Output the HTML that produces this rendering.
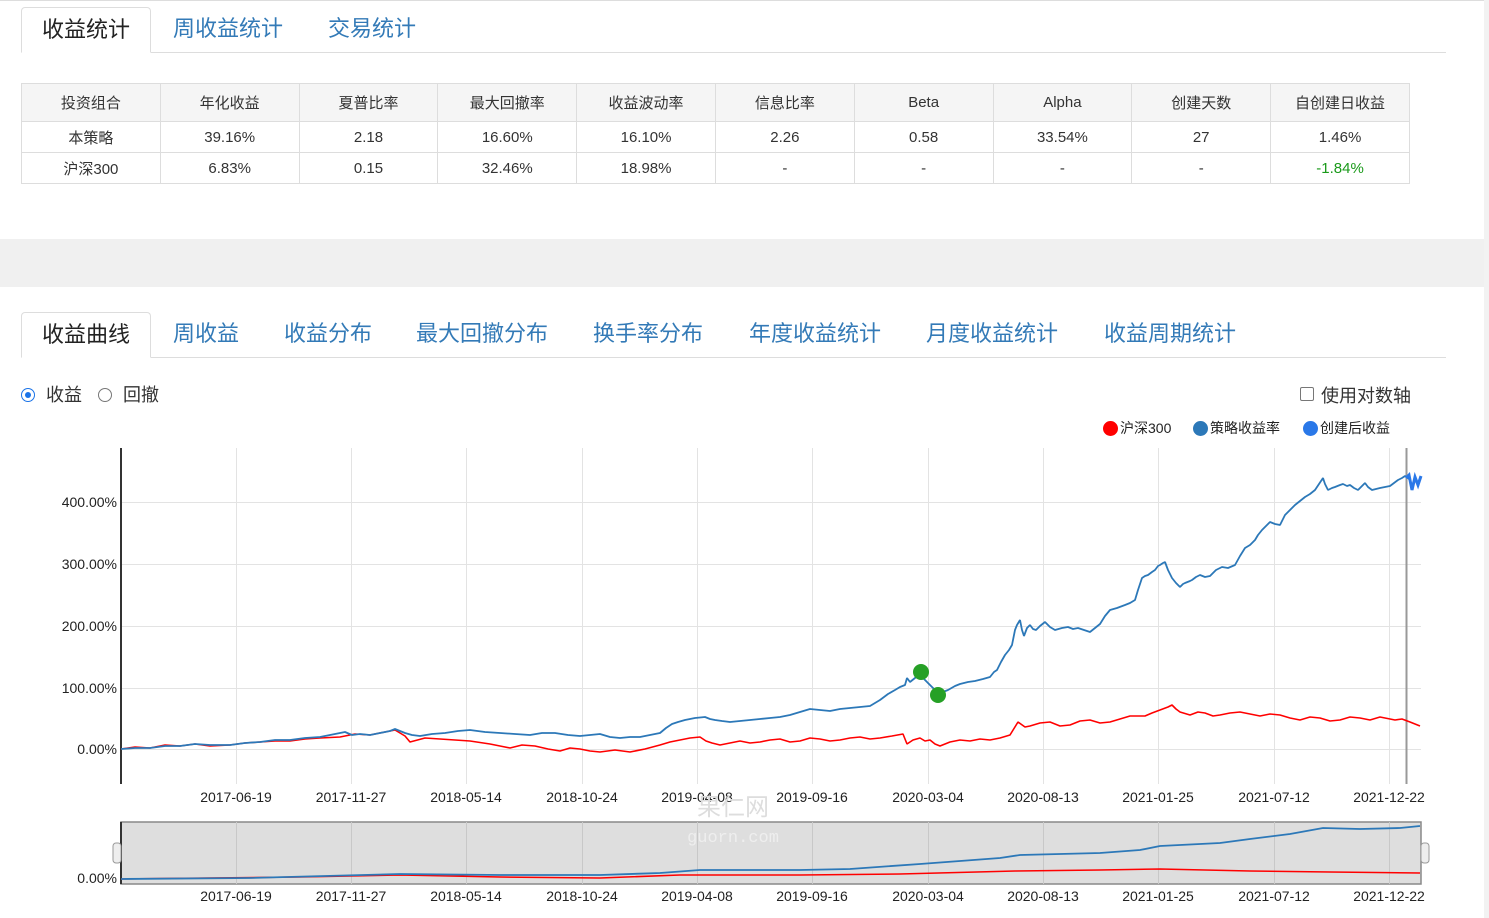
<!DOCTYPE html>
<html><head><meta charset="utf-8"><style>
*{margin:0;padding:0;box-sizing:border-box}
body{width:1489px;height:918px;background:#fff;font-family:"Liberation Sans","Noto Sans CJK SC",sans-serif;position:relative;overflow:hidden;color:#333}
.abs{position:absolute}
.tabs{position:absolute;left:21px;width:1425px;height:46px;border-bottom:1px solid #ddd}
.tab{position:absolute;top:0;height:46px;line-height:44px;font-size:22px;color:#337ab7;white-space:nowrap}
.tab.act{border:1px solid #ddd;border-bottom-color:#fff;border-radius:4px 4px 0 0;color:#222;background:#fff;text-align:center}
table{position:absolute;left:21px;top:83px;border-collapse:collapse;width:1389px;font-size:15px}
td{border:1px solid #ddd;text-align:center;width:138.9px;color:#333}
tr.h td{height:38px;background:#f5f5f5}
tr.r td{height:31px}
.lg{position:absolute;top:419px;font-size:14px;line-height:18px;color:#222;white-space:nowrap}
.dot{display:inline-block;width:15px;height:15px;border-radius:50%;vertical-align:-3px;margin-right:2px}
</style></head><body>
<div class="abs" style="left:0;top:0;width:1489px;height:1px;background:#ddd"></div>
<div class="abs" style="left:1484px;top:0;width:5px;height:918px;background:#f2f2f2"></div>
<div class="tabs" style="top:7px">
<div class="tab act" style="left:0;width:130px">收益统计</div>
<div class="tab" style="left:152px">周收益统计</div>
<div class="tab" style="left:307px">交易统计</div>
</div>
<table>
<tr class="h"><td>投资组合</td><td>年化收益</td><td>夏普比率</td><td>最大回撤率</td><td>收益波动率</td><td>信息比率</td><td>Beta</td><td>Alpha</td><td>创建天数</td><td>自创建日收益</td></tr>
<tr class="r"><td>本策略</td><td>39.16%</td><td>2.18</td><td>16.60%</td><td>16.10%</td><td>2.26</td><td>0.58</td><td>33.54%</td><td>27</td><td>1.46%</td></tr>
<tr class="r"><td>沪深300</td><td>6.83%</td><td>0.15</td><td>32.46%</td><td>18.98%</td><td>-</td><td>-</td><td>-</td><td>-</td><td style="color:#1a9a1a">-1.84%</td></tr>
</table>
<div class="abs" style="left:0;top:239px;width:1484px;height:48px;background:#f0f0f0"></div>
<div class="tabs" style="top:312px">
<div class="tab act" style="left:0;width:130px">收益曲线</div>
<div class="tab" style="left:152px">周收益</div>
<div class="tab" style="left:263px">收益分布</div>
<div class="tab" style="left:395px">最大回撤分布</div>
<div class="tab" style="left:572px">换手率分布</div>
<div class="tab" style="left:728px">年度收益统计</div>
<div class="tab" style="left:905px">月度收益统计</div>
<div class="tab" style="left:1083px">收益周期统计</div>
</div>
<div class="abs" style="left:21px;top:388px;width:14px;height:14px;border:1px solid #1a73e8;border-radius:50%"><div style="position:absolute;left:3px;top:3px;width:6px;height:6px;border-radius:50%;background:#1a73e8"></div></div>
<div class="abs" style="left:46px;top:384px;font-size:18px;line-height:22px">收益</div>
<div class="abs" style="left:98px;top:388px;width:14px;height:14px;border:1px solid #777;border-radius:50%"></div>
<div class="abs" style="left:123px;top:384px;font-size:18px;line-height:22px">回撤</div>
<div class="abs" style="left:1300px;top:387px;width:14px;height:14px;border:1px solid #777;border-radius:2px"></div>
<div class="abs" style="left:1321px;top:385px;font-size:18px;line-height:22px">使用对数轴</div>
<div class="lg" style="left:1103px"><span class="dot" style="background:#f00"></span>沪深300</div>
<div class="lg" style="left:1193px"><span class="dot" style="background:#2c78b8"></span>策略收益率</div>
<div class="lg" style="left:1303px"><span class="dot" style="background:#2a78e8"></span>创建后收益</div>
<svg class="abs" style="left:0;top:0" width="1489" height="918" font-family="Liberation Sans,sans-serif" font-size="14">
<g stroke="#e3e3e3" stroke-width="1">
<line x1="121" x2="1421" y1="502.5" y2="502.5"/><line x1="121" x2="1421" y1="564.5" y2="564.5"/><line x1="121" x2="1421" y1="626.5" y2="626.5"/><line x1="121" x2="1421" y1="688.5" y2="688.5"/><line x1="121" x2="1421" y1="749.5" y2="749.5"/>
<line x1="236.5" x2="236.5" y1="448" y2="784"/><line x1="351.5" x2="351.5" y1="448" y2="784"/><line x1="466.5" x2="466.5" y1="448" y2="784"/><line x1="582.5" x2="582.5" y1="448" y2="784"/><line x1="697.5" x2="697.5" y1="448" y2="784"/><line x1="812.5" x2="812.5" y1="448" y2="784"/><line x1="928.5" x2="928.5" y1="448" y2="784"/><line x1="1043.5" x2="1043.5" y1="448" y2="784"/><line x1="1158.5" x2="1158.5" y1="448" y2="784"/><line x1="1274.5" x2="1274.5" y1="448" y2="784"/><line x1="1389.5" x2="1389.5" y1="448" y2="784"/>
</g>
<line x1="121" x2="121" y1="448" y2="784" stroke="#333" stroke-width="2"/>
<line x1="1406.5" x2="1406.5" y1="448" y2="784" stroke="#999" stroke-width="2"/>
<g fill="#222" text-anchor="end"><text x="117" y="507">400.00%</text><text x="117" y="569">300.00%</text><text x="117" y="631">200.00%</text><text x="117" y="693">100.00%</text><text x="117" y="754">0.00%</text></g>
<g fill="#222" text-anchor="middle">
<text x="236" y="802">2017-06-19</text><text x="351" y="802">2017-11-27</text><text x="466" y="802">2018-05-14</text><text x="582" y="802">2018-10-24</text><text x="697" y="802">2019-04-08</text><text x="812" y="802">2019-09-16</text><text x="928" y="802">2020-03-04</text><text x="1043" y="802">2020-08-13</text><text x="1158" y="802">2021-01-25</text><text x="1274" y="802">2021-07-12</text><text x="1389" y="802">2021-12-22</text>
<text x="236" y="901">2017-06-19</text><text x="351" y="901">2017-11-27</text><text x="466" y="901">2018-05-14</text><text x="582" y="901">2018-10-24</text><text x="697" y="901">2019-04-08</text><text x="812" y="901">2019-09-16</text><text x="928" y="901">2020-03-04</text><text x="1043" y="901">2020-08-13</text><text x="1158" y="901">2021-01-25</text><text x="1274" y="901">2021-07-12</text><text x="1389" y="901">2021-12-22</text>
</g>
<polyline fill="none" stroke="#f00" stroke-width="1.6" stroke-linejoin="bevel" points="121,749 135,747 150,748 165,745 180,746 195,744 210,746 230,745 245,743 260,742 275,741 290,741 305,739 320,738 340,737 355,734 370,735 385,732 395,730 400,733 405,736 410,742 425,738 440,739 455,740 470,741 490,744 500,746 510,748 522,745 535,746 548,749 560,751 570,748 580,749 590,751 600,752 615,750 630,752 645,749 660,745 670,742 680,740 690,738 700,737 706,741 712,743 720,745 730,743 740,741 750,743 760,742 770,740 780,739 790,742 800,741 810,738 820,739 830,741 840,740 850,738 860,737 870,739 880,738 892,736 903,734 907,744 913,740 920,738 925,741 930,740 935,744 940,746 950,742 960,740 970,741 980,739 990,740 1000,738 1010,735 1018,722 1025,727 1030,726 1040,723 1050,722 1060,726 1070,725 1080,721 1090,720 1100,723 1110,722 1120,719 1130,716 1145,716 1152,713 1160,710 1168,707 1172,705 1176,709 1180,712 1190,715 1198,712 1205,713 1213,716 1220,715 1230,713 1240,712 1250,714 1260,716 1270,714 1280,715 1290,718 1300,720 1310,717 1320,718 1330,721 1340,720 1350,717 1360,718 1370,720 1380,717 1395,720 1402,719 1410,722 1420,726"/>
<polyline fill="none" stroke="#2c78b8" stroke-width="1.8" stroke-linejoin="bevel" points="121,749 135,748 150,748 165,746 180,746 195,744 210,745 230,745 245,743 260,742 275,740 290,740 305,738 320,737 335,734 345,732 352,735 360,734 370,735 380,733 390,731 395,729 400,731 405,733 412,735 420,736 432,734 445,733 458,731 470,730 485,732 500,733 515,734 530,735 542,733 555,733 568,735 580,736 590,735 600,734 610,737 620,738 630,737 640,737 650,735 660,733 666,728 672,724 678,722 685,720 695,718 705,717 710,719 715,720 722,721 730,722 740,721 750,720 760,719 770,718 780,717 790,715 800,712 810,709 820,710 830,711 840,709 850,708 860,707 870,706 875,703 880,700 888,694 895,690 900,687 905,685 907,678 910,682 915,678 918,675 921,672 923,678 925,680 928,683 930,685 934,689 938,695 943,692 948,690 955,686 960,684 968,682 975,681 983,679 990,677 994,672 997,670 1001,662 1005,655 1009,650 1012,645 1015,630 1017,625 1020,620 1022,630 1024,636 1027,628 1030,625 1033,629 1036,630 1040,626 1045,622 1050,627 1055,630 1062,628 1068,627 1073,629 1078,628 1084,630 1090,632 1095,628 1100,624 1105,616 1110,610 1117,608 1125,605 1130,603 1135,600 1138,590 1142,578 1145,576 1148,575 1152,572 1155,570 1158,566 1160,565 1163,563 1165,562 1168,570 1172,578 1176,583 1180,587 1183,584 1185,583 1190,581 1192,580 1196,577 1200,575 1205,577 1210,576 1216,570 1222,567 1228,568 1235,565 1240,556 1245,548 1250,545 1255,540 1258,535 1262,530 1266,526 1270,522 1275,524 1280,525 1283,519 1285,515 1290,510 1295,505 1300,501 1305,497 1310,494 1315,490 1319,484 1323,478 1325,484 1328,490 1332,488 1335,487 1340,485 1343,484 1347,486 1350,485 1354,488 1358,490 1362,486 1365,483 1368,487 1372,490 1376,489 1380,488 1385,487 1390,486 1394,483 1398,480 1402,478 1405,476 1408,478 1410,480"/>
<polyline fill="none" stroke="#2a78e8" stroke-width="3" points="1406,478 1409,475 1412,490 1415,477 1418,485 1421,476"/>
<circle cx="921" cy="672" r="8" fill="#26a026"/><circle cx="938" cy="695" r="8" fill="#26a026"/>
<rect x="121" y="822" width="1300" height="62" fill="#dedede" stroke="#888" stroke-width="1.5"/>
<g stroke="#c8c8c8"><line x1="236.5" x2="236.5" y1="822" y2="884"/><line x1="351.5" x2="351.5" y1="822" y2="884"/><line x1="466.5" x2="466.5" y1="822" y2="884"/><line x1="582.5" x2="582.5" y1="822" y2="884"/><line x1="697.5" x2="697.5" y1="822" y2="884"/><line x1="812.5" x2="812.5" y1="822" y2="884"/><line x1="928.5" x2="928.5" y1="822" y2="884"/><line x1="1043.5" x2="1043.5" y1="822" y2="884"/><line x1="1158.5" x2="1158.5" y1="822" y2="884"/><line x1="1274.5" x2="1274.5" y1="822" y2="884"/><line x1="1389.5" x2="1389.5" y1="822" y2="884"/></g>
<line x1="121" x2="121" y1="822" y2="884" stroke="#333" stroke-width="2"/>
<polyline fill="none" stroke="#f00" stroke-width="1.5" points="121,879 300,877 400,875 500,877 600,878 680,875 700,875 800,875 900,874 1015,871 1100,870 1160,869 1250,871 1330,872 1420,873"/>
<polyline fill="none" stroke="#2c78b8" stroke-width="1.8" points="121,879 250,878 400,874 500,875 600,875 660,873 700,870 800,870 850,869 920,864 1000,858 1020,855 1100,853 1140,850 1160,846 1220,843 1250,839 1290,834 1323,828 1360,829 1400,828 1420,826"/>
<rect x="113" y="843" width="8" height="20" rx="3" fill="#eee" stroke="#999"/><rect x="1421" y="843" width="8" height="20" rx="3" fill="#eee" stroke="#999"/>
<text x="117" y="883" fill="#222" text-anchor="end">0.00%</text>
<text x="733" y="815" fill="#ddd" font-size="24" text-anchor="middle" font-family="Noto Sans CJK SC,sans-serif">果仁网</text>
<text x="733" y="842" fill="#eee" font-size="17" text-anchor="middle" font-family="Liberation Mono,monospace">guorn.com</text>
</svg>
</body></html>
